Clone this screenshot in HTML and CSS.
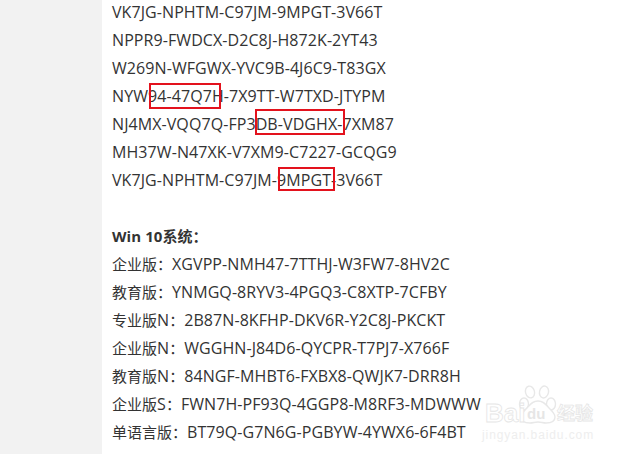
FILE: index.html
```html
<!DOCTYPE html>
<html lang="zh">
<head>
<meta charset="utf-8">
<title>Win 10</title>
<link rel="stylesheet" href="styles.css">
</head>
<body>
<main class="page">
  <article class="content">
    <p>VK7JG-NPHTM-C97JM-9MPGT-3V66T</p>
    <p>NPPR9-FWDCX-D2C8J-H872K-2YT43</p>
    <p>W269N-WFGWX-YVC9B-4J6C9-T83GX</p>
    <p>NYW94-47Q7H-7X9TT-W7TXD-JTYPM</p>
    <p>NJ4MX-VQQ7Q-FP3DB-VDGHX-7XM87</p>
    <p>MH37W-N47XK-V7XM9-C7227-GCQG9</p>
    <p>VK7JG-NPHTM-C97JM-9MPGT-3V66T</p>
    <p>&nbsp;</p>
    <p class="title">Win 10<span class="cn">系统：</span></p>
    <p><span class="cn">企业版：</span>XGVPP-NMH47-7TTHJ-W3FW7-8HV2C</p>
    <p><span class="cn">教育版：</span>YNMGQ-8RYV3-4PGQ3-C8XTP-7CFBY</p>
    <p><span class="cn">专业版</span>N<span class="cn">：</span>2B87N-8KFHP-DKV6R-Y2C8J-PKCKT</p>
    <p><span class="cn">企业版</span>N<span class="cn">：</span>WGGHN-J84D6-QYCPR-T7PJ7-X766F</p>
    <p><span class="cn">教育版</span>N<span class="cn">：</span>84NGF-MHBT6-FXBX8-QWJK7-DRR8H</p>
    <p><span class="cn">企业版</span>S<span class="cn">：</span>FWN7H-PF93Q-4GGP8-M8RF3-MDWWW</p>
    <p><span class="cn">单语言版：</span>BT79Q-G7N6G-PGBYW-4YWX6-6F4BT</p>
  </article>
</main>
<div class="mark mark-a"></div>
<div class="mark mark-b"></div>
<div class="mark mark-c"></div>
<div class="logo">
  <svg width="116" height="62" viewBox="0 0 116 62" aria-hidden="true">
    <g class="paw">
      <ellipse cx="49" cy="8" rx="4.5" ry="6" transform="rotate(-15 49 8)"/>
      <ellipse cx="63" cy="8" rx="4.5" ry="6" transform="rotate(12 63 8)"/>
      <ellipse cx="43" cy="20" rx="4.5" ry="6"/>
      <ellipse cx="70" cy="20" rx="4.5" ry="6"/>
      <path d="M57 17c6 0 8 4 12 8 3 3 5 5 5 8 0 5-4 6-9 6-3 0-5-1-8-1s-5 1-8 1c-5 0-9-1-9-6 0-3 2-5 5-8 4-4 6-8 12-8z"/>
    </g>
    <text class="logo-bai" x="4" y="38">Bai</text>
    <text class="logo-du" x="46" y="35">du</text>
    <text class="logo-cn" x="76" y="36">经验</text>
    <text class="logo-url" x="1" y="55">jingyan.baidu.com</text>
  </svg>
</div>
</body>
</html>
```
FILE: styles.css
```css
* { box-sizing: border-box; }
html, body { margin: 0; height: 454px; overflow: hidden; }
body { background: #fff; position: relative; }
.page { height: 454px; padding-left: 102px; background: #f2f2f2; overflow: hidden; }
.content {
  height: 454px;
  background: #fff;
  padding: 0 0 0 10px;
  font: 16px/28px "Open Sans", "Noto Sans CJK SC", sans-serif;
  letter-spacing: .08px;
  color: #333;
}
.content p { margin: 0; white-space: nowrap; position: relative; top: -2px; }
.cn { font-size: 15px; letter-spacing: 0; }
.title { font-weight: 700; font-size: 15px; }
.mark { position: absolute; border: 2px solid #e3121d; }
.mark-a { left: 149px; top: 83px; width: 72px; height: 26px; }
.mark-b { left: 255px; top: 109px; width: 90px; height: 26px; }
.mark-c { left: 278px; top: 167px; width: 57px; height: 24px; }
.logo { position: absolute; left: 481px; top: 384px; width: 116px; height: 62px; }
.paw { fill: #fff; stroke: #e8e8e8; stroke-width: 1.4; }
.logo text { fill: #fff; stroke: #e6e6e6; stroke-width: .8; }
.logo .logo-du { fill: #e6e6e6; stroke: none; }
.logo .logo-url { fill: #eee; stroke: none; }
.logo-bai { font: 700 26px "Liberation Sans", sans-serif; }
.logo-du { font: 700 15px "Liberation Sans", sans-serif; }
.logo-cn { font: 700 18px "Noto Sans CJK SC", sans-serif; }
.logo-url { font: 400 12px "Liberation Sans", sans-serif; letter-spacing: .9px; }
```
